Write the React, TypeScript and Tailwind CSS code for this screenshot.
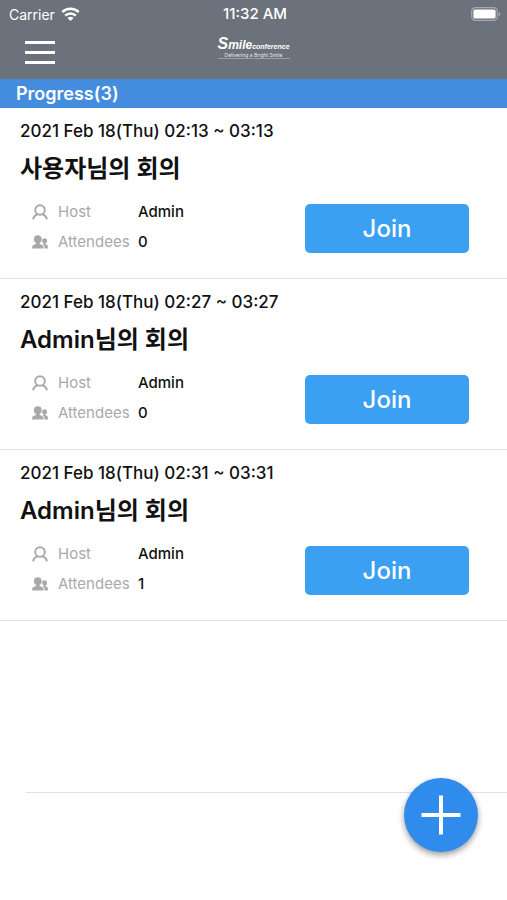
import React from "react";

type Meeting = {
  id: number;
  time: string;
  title: string;
  host: string;
  attendees: number;
};

const meetings: Meeting[] = [
  { id: 1, time: "2021 Feb 18(Thu) 02:13 ~ 03:13", title: "사용자님의 회의", host: "Admin", attendees: 0 },
  { id: 2, time: "2021 Feb 18(Thu) 02:27 ~ 03:27", title: "Admin님의 회의", host: "Admin", attendees: 0 },
  { id: 3, time: "2021 Feb 18(Thu) 02:31 ~ 03:31", title: "Admin님의 회의", host: "Admin", attendees: 1 },
];

function WifiIcon() {
  return (
    <svg className="h-[15px] w-[19px]" viewBox="0 0 19 15" fill="none" stroke="white" strokeWidth="2.5" aria-hidden="true">
      <path d="M1.2 5.2a11.8 11.8 0 0 1 16.6 0" />
      <path d="M4.2 8.6a7.5 7.5 0 0 1 10.6 0" />
      <path d="M9.5 14 6.5 11a4.2 4.2 0 0 1 6 0z" fill="white" stroke="none" />
    </svg>
  );
}

function BatteryIcon() {
  return (
    <svg className="h-[14px] w-[30px]" viewBox="0 0 30 14" aria-hidden="true">
      <rect x="0.7" y="0.7" width="25.6" height="12.6" rx="3.6" fill="none" stroke="#a5aab0" strokeWidth="1.2" />
      <rect x="2.4" y="2.4" width="22.2" height="9.2" rx="1.6" fill="white" />
      <path d="M27.6 4.8c1.2.4 1.7 1.2 1.7 2.2s-.5 1.8-1.7 2.2z" fill="#a5aab0" />
    </svg>
  );
}

function HostIcon() {
  return (
    <svg className="h-4 w-4" viewBox="0 0 16 16" fill="none" stroke="#a9a9a9" strokeWidth="1.9" aria-hidden="true">
      <circle cx="8" cy="6" r="4.8" />
      <path d="M1 15.2c.6-2.400 2.200-4 4.600-5M15 15.200c-.6-2.400-2.200-4-4.600-5" />
    </svg>
  );
}

function AttendeesIcon() {
  return (
    <svg className="h-4 w-4" viewBox="0 0 16 16" fill="#a9a9a9" aria-hidden="true">
      <circle cx="5.8" cy="5.2" r="3.9" />
      <path d="M4 8h3.600v2l2.600 1c.8.400 1.200.900 1.200 1.700v1.800H.2v-1.800c0-.8.400-1.300 1.200-1.700L4 10z" />
      <circle cx="12.6" cy="6.800" r="2.500" />
      <path d="M11.600 8.800h2v1.500l1.300.600c.7.300 1 .7 1 1.300v2.300h-3.600v-2.200c0-.8-.5-1.400-1.700-1.900l1-.500z" />
    </svg>
  );
}

function Logo() {
  return (
    <div className="flex w-[72px] flex-col items-center self-start justify-self-center text-white">
      <p className="flex items-baseline font-['Liberation_Sans',sans-serif] leading-none font-bold italic">
        <span className="text-[16px]">S</span>
        <span className="text-[12px]">mile</span>
        <span className="text-[7px]">conference</span>
      </p>
      <p className="w-full border-b border-[#9ba0a6] text-center text-[5px] leading-[6px] whitespace-nowrap text-gray-200">
        Delivering a Bright Smile
      </p>
    </div>
  );
}

function MeetingCard({ meeting }: { meeting: Meeting }) {
  return (
    <li className="border-b border-[#e0e0e0] px-5 pt-[11px] pb-6">
      <p className="text-[17px] leading-6 font-medium">{meeting.time}</p>
      <h2 className="mt-[10px] text-[24px] leading-8 font-semibold">{meeting.title}</h2>
      <div className="mt-[15px] flex items-start justify-between pr-[18px] pl-3">
        <dl className="flex flex-col gap-[6px] text-[15px] leading-6">
          <div className="flex">
            <dt className="flex w-[106px] items-center gap-[10px] text-[#a9a9a9]">
              <HostIcon />
              Host
            </dt>
            <dd className="font-medium">{meeting.host}</dd>
          </div>
          <div className="flex">
            <dt className="flex w-[106px] items-center gap-[10px] text-[#a9a9a9]">
              <AttendeesIcon />
              Attendees
            </dt>
            <dd className="font-medium">{meeting.attendees}</dd>
          </div>
        </dl>
        <button
          type="button"
          className="mt-1 h-[49px] w-[164px] rounded-[5px] bg-[#3b9ff2] text-[24px] font-medium text-white"
        >
          Join
        </button>
      </div>
    </li>
  );
}

export default function App() {
  return (
    <div className="relative min-h-screen bg-white font-['Inter','Noto_Sans_CJK_KR',sans-serif] text-[#111]">
      <header className="bg-[#6b727b] pb-[11px] text-white">
        {/* Status bar */}
        <div className="grid h-7 grid-cols-3 items-center pr-[6px] pl-[9px] text-[14px]">
          <div className="flex items-center gap-[6px]">
            <span>Carrier</span>
            <WifiIcon />
          </div>
          <span className="text-center text-[15px] font-medium">11:32 AM</span>
          <div className="flex justify-end">
            <BatteryIcon />
          </div>
        </div>

        {/* Navigation */}
        <nav className="mt-2 grid h-8 grid-cols-3 items-center px-6">
          <button type="button" aria-label="Menu" className="flex w-8 flex-col gap-[7px] px-px">
            <span className="h-[3px] bg-white"></span>
            <span className="h-[3px] bg-white"></span>
            <span className="h-[3px] bg-white"></span>
          </button>
          <Logo />
        </nav>
      </header>

      <main>
        <h1 className="bg-[#438cde] px-4 text-[18px] leading-[29px] font-semibold text-white">
          Progress({meetings.length})
        </h1>
        <ul>
          {meetings.map((meeting) => (
            <MeetingCard key={meeting.id} meeting={meeting} />
          ))}
          {/* Empty row */}
          <li className="ml-[26px] h-[172px] border-b border-[#e0e0e0]"></li>
        </ul>
      </main>

      <button
        type="button"
        aria-label="Add meeting"
        className="absolute right-[29px] bottom-12 flex size-[74px] items-center justify-center rounded-full bg-[#2f8cec] shadow-[0_3px_6px_rgba(0,0,0,0.4)]"
      >
        <svg className="size-10" viewBox="0 0 40 40" stroke="white" strokeWidth="4" aria-hidden="true">
          <path d="M20 0.500v39M0.500 20h39" />
        </svg>
      </button>
    </div>
  );
}
